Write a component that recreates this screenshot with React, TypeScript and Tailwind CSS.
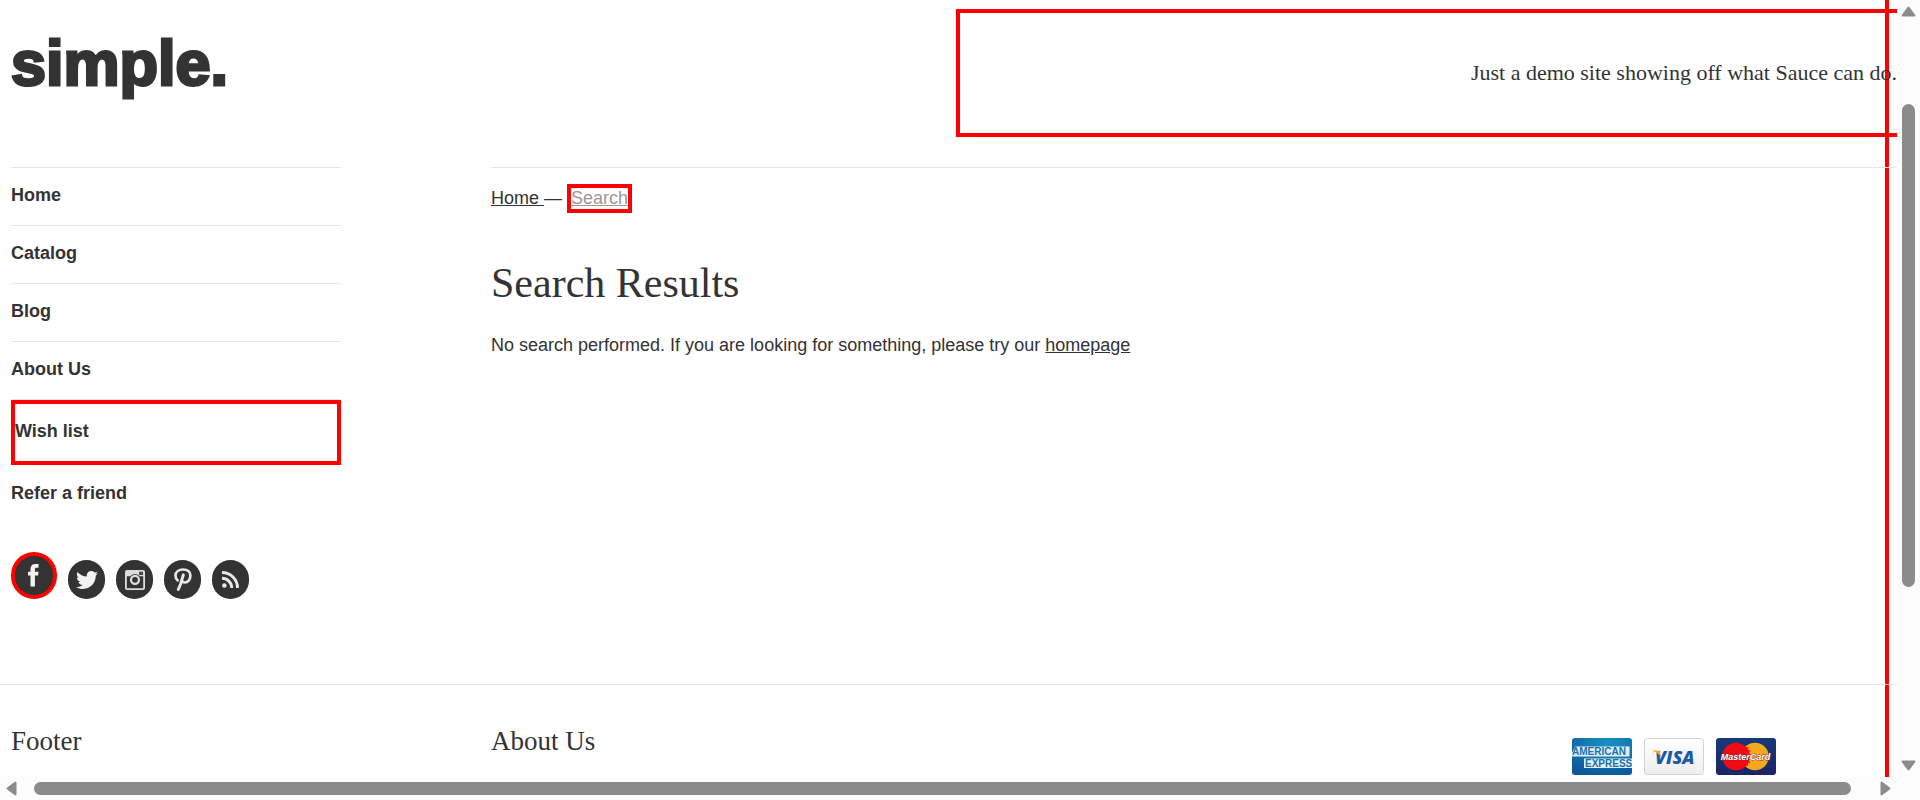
import { FaTwitter } from "react-icons/fa";
import type { ReactNode } from "react";

const navItems = ["Home", "Catalog", "Blog", "About Us", "Wish list", "Refer a friend"];

function Facebook() {
  return (
    <svg viewBox="0 0 11 23" className="mr-[2px] h-[23px] w-[11px]" aria-hidden="true">
      <path
        fill="#f2f2f2"
        d="M2.500 22.500V11.500H0V7.700h2.500V5.200C2.500 1.700 4.300 0 7.300 0H10.500v3.700H8.600C7.200 3.700 6.900 4.300 6.900 5.500v2.200h3.600l-.4 3.800H6.900v11z"
      />
    </svg>
  );
}

function Instagram() {
  return (
    <svg viewBox="0 0 20 20" className="h-5 w-5" fill="none" stroke="#dcdcdc" aria-hidden="true">
      <rect x="0.900" y="0.900" width="18.200" height="18.200" rx="1" strokeWidth="1.800" />
      <path d="M1 1h13v5H1zM18 1h1.200v4.500H18zM1 5h18.200v1.200H1z" fill="#dcdcdc" stroke="none" />
      <path d="M14.500 2.200h2.800v2.300h-2.800z" fill="#555" stroke="none" />
      <circle cx="10" cy="9.800" r="5.900" fill="#333" stroke="none" />
      <circle cx="10" cy="9.800" r="4" strokeWidth="2.300" />
    </svg>
  );
}

function Pinterest() {
  return (
    <svg viewBox="0 0 18 23" className="h-[23px] w-[18px]" fill="none" stroke="#e8e8e8" strokeLinecap="round" aria-hidden="true">
      <path d="M3.600 12.300C2 11 1.500 9.300 1.500 7.500 1.500 4 4.500 1.500 9.200 1.500c4.200 0 7.200 2.300 7.200 6 0 4-2.400 7-5.500 7-1.500 0-2.500-.7-3-1.800" strokeWidth="2.700" />
      <path d="M9.300 6.800L6.800 15.500 4.300 21.500" strokeWidth="2.900" />
    </svg>
  );
}

function Rss() {
  return (
    <svg viewBox="0 0 17 17" className="h-[17px] w-[17px]" fill="none" stroke="#e8e8e8" strokeWidth="2.900" aria-hidden="true">
      <path d="M0 1.500A15.500 15.500 0 0 1 15.500 17M0 7.300A9.700 9.700 0 0 1 9.700 17" />
      <circle cx="2.400" cy="14.500" r="2.300" fill="#e8e8e8" stroke="none" />
    </svg>
  );
}

const socials: { name: string; icon: ReactNode; marked?: boolean }[] = [
  { name: "Facebook", icon: <Facebook />, marked: true },
  { name: "Twitter", icon: <FaTwitter className="h-[22px] w-[22px]" /> },
  { name: "Instagram", icon: <Instagram /> },
  { name: "Pinterest", icon: <Pinterest /> },
  { name: "RSS", icon: <Rss /> },
];

function Amex() {
  return (
    <svg viewBox="0 0 60 37" className="h-[37px] w-[60px]" role="img" aria-label="American Express">
      <defs>
        <radialGradient id="amex" cx="0.6" cy="0.15" r="0.9">
          <stop offset="0" stopColor="#1792c6" />
          <stop offset="1" stopColor="#0d5797" />
        </radialGradient>
        <clipPath id="amexClip">
          <rect width="60" height="37" rx="3" />
        </clipPath>
      </defs>
      <g clipPath="url(#amexClip)">
        <rect width="60" height="37" fill="url(#amex)" />
        <path d="M3 8.500h54.500v10H0V15zM12 20.500h48v9.500H12z" fill="#e3eff6" />
        <g fontFamily="Liberation Sans, sans-serif" fontWeight="700" fontSize="10" fill="#1671ae">
          <text x="0" y="17">AMERICAN</text>
          <text x="13" y="29">EXPRESS</text>
        </g>
      </g>
    </svg>
  );
}

function Visa() {
  return (
    <svg viewBox="0 0 60 37" className="h-[37px] w-[60px]" role="img" aria-label="Visa">
      <defs>
        <linearGradient id="visa" x2="0" y2="1">
          <stop offset="0" stopColor="#ffffff" />
          <stop offset="1" stopColor="#eeeeee" />
        </linearGradient>
      </defs>
      <rect x="0.5" y="0.5" width="59" height="36" rx="3" fill="url(#visa)" stroke="#d2d2d2" />
      <text x="11" y="25.500" fontFamily="Open Sans, sans-serif" fontWeight="800" fontStyle="italic" fontSize="18" fill="#1b5ba5">
        VISA
      </text>
      <path d="M8 12.600h5.500q1.800 0 2.200 1.500l1.300 5Q14 15 8 12.600z" fill="#f5a81c" />
    </svg>
  );
}

function MasterCard() {
  return (
    <svg viewBox="0 0 60 37" className="h-[37px] w-[60px]" role="img" aria-label="MasterCard">
      <defs>
        <linearGradient id="mc" x2="0" y2="1">
          <stop offset="0" stopColor="#173a7c" />
          <stop offset="1" stopColor="#1b2463" />
        </linearGradient>
      </defs>
      <rect width="60" height="37" rx="3" fill="url(#mc)" />
      <circle cx="39" cy="18.500" r="13.800" fill="#f6a81d" />
      <circle cx="20" cy="18.500" r="13.800" fill="#f00a12" />
      <path d="M29.500 10h3M29.500 13h5M29.500 24h4.500M29.500 27h2.500" stroke="#f00a12" strokeWidth="1.500" />
      <text x="29.500" y="22" textAnchor="middle" fontFamily="Liberation Sans, sans-serif" fontWeight="700" fontStyle="italic" fontSize="9" fill="#fff" stroke="#7a2a30" strokeWidth="0.8" paintOrder="stroke">
        MasterCard
      </text>
    </svg>
  );
}

function Arrow({ turn }: { turn: string }) {
  return (
    <svg viewBox="0 0 15 11" className={"h-[11px] w-[15px] shrink-0 " + turn} aria-hidden="true">
      <path d="M7.500 1.500L13.500 9.500H1.500z" fill="#8b8b8b" stroke="#8b8b8b" strokeWidth="2" strokeLinejoin="round" />
    </svg>
  );
}

export default function App() {
  return (
    <div className="grid h-screen grid-cols-[minmax(0,1fr)_23px] grid-rows-[minmax(0,1fr)_23px] bg-[#fcfcfc] font-['Liberation_Sans',Arial,sans-serif] text-lg text-[#333]">
      <div className="overflow-hidden bg-white">
        <div className="mr-2 border-r-4 border-[#f00]">
          <div className="-mr-3">
            <header className="flex items-start justify-between pt-[9px] pl-[11px]">
              <a
                href="#"
                className="mt-4 text-[63px] leading-[76px] font-bold [-webkit-text-stroke:3px_#333]"
              >
                simple.
              </a>
              <div className="h-32 w-[941px] border-y-4 border-l-4 border-[#f00] pt-11 text-right font-['Liberation_Serif',serif] text-[22px] leading-8">
                Just a demo site showing off what Sauce can do.
              </div>
            </header>

            <div className="mt-[30px] flex gap-[150px] pl-[11px]">
              <aside className="w-[330px] shrink-0">
                <nav>
                  <ul>
                    {navItems.map((item) => (
                      <li key={item} className="border-t border-[#e7e7e7] last:border-transparent">
                        <a
                          href="#"
                          className={
                            item === "Wish list"
                              ? "block border-4 border-[#f00] pt-[14px] pb-4 leading-[27px] font-bold"
                              : "block pt-[14px] pb-4 leading-[27px] font-bold"
                          }
                        >
                          {item}
                        </a>
                      </li>
                    ))}
                  </ul>
                </nav>
                <ul className="mt-[29px] flex items-end gap-[11px]">
                  {socials.map((s) => (
                    <li key={s.name}>
                      <a
                        href="#"
                        aria-label={s.name}
                        className={
                          s.marked
                            ? "flex h-[47px] w-[46px] items-center justify-center rounded-full border-4 border-[#f00] bg-[#333] text-white"
                            : "flex h-[39px] w-[37px] items-center justify-center rounded-full bg-[#333] text-[#f2f2f2]"
                        }
                      >
                        {s.icon}
                      </a>
                    </li>
                  ))}
                </ul>
              </aside>

              <main className="min-w-0 flex-1 border-t border-[#e7e7e7]">
                <div className="flex h-[61px] items-baseline pt-4 whitespace-pre">
                  <a href="#" className="leading-5 underline">{"Home "}</a>
                  <span className="leading-5">{"— "}</span>
                  <a href="#" className="border-4 border-[#f00] pb-px leading-5 text-[#999] underline">Search</a>
                </div>
                <h1 className="mt-[27px] font-['Liberation_Serif',serif] text-[42px] leading-[54px]">Search Results</h1>
                <p className="mt-[22px] leading-[27px]">
                  No search performed. If you are looking for something, please try our{" "}
                  <a href="#" className="underline">homepage</a>
                </p>
              </main>
            </div>

            <footer className="mt-[85px] flex items-start gap-[150px] border-t border-[#e7e7e7] pt-[38px] pb-20 pl-[11px]">
              <h2 className="w-[330px] font-['Liberation_Serif',serif] text-[27px] leading-9">Footer</h2>
              <h2 className="font-['Liberation_Serif',serif] text-[27px] leading-9">About Us</h2>
              <div className="mt-[15px] mr-[121px] ml-auto flex gap-3">
                <Amex />
                <Visa />
                <MasterCard />
              </div>
            </footer>
          </div>
        </div>
      </div>

      <div className="flex flex-col items-center py-[6px]">
        <Arrow turn="" />
        <div className="grid w-[13px] flex-1 grid-rows-[87fr_483fr_173fr]">
          <div className="row-start-2 rounded-full bg-[#8b8b8b]" />
        </div>
        <Arrow turn="rotate-180" />
      </div>

      <div className="flex items-center px-1">
        <Arrow turn="-rotate-90" />
        <div className="grid h-[13px] flex-1 grid-cols-[15fr_1817fr_27fr]">
          <div className="col-start-2 rounded-full bg-[#8b8b8b]" />
        </div>
        <Arrow turn="rotate-90" />
      </div>
    </div>
  );
}
